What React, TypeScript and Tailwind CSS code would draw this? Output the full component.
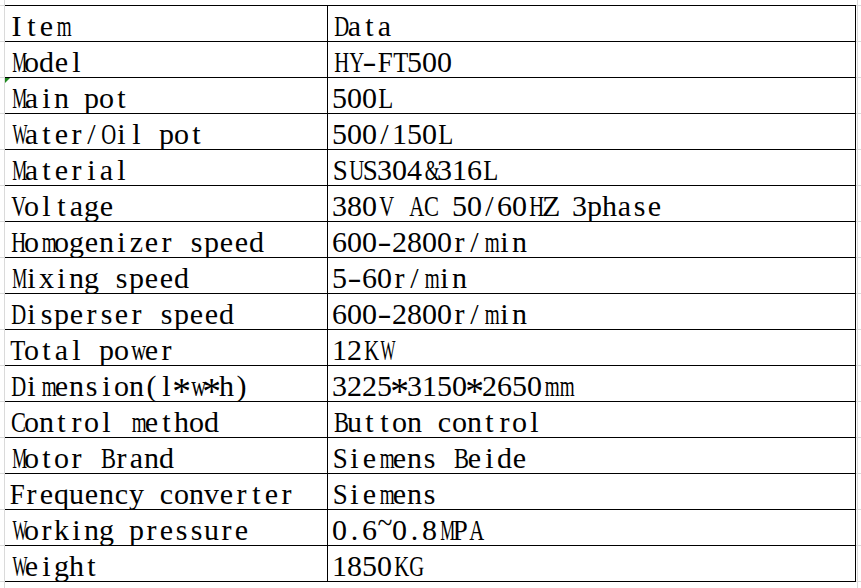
import React from "react";

const rows: [string, string][] = [
  ["Item", "Data"],
  ["Model", "HY-FT500"],
  ["Main pot", "500L"],
  ["Water/Oil pot", "500/150L"],
  ["Material", "SUS304&316L"],
  ["Voltage", "380V AC 50/60HZ 3phase"],
  ["Homogenizer speed", "600-2800r/min"],
  ["Mixing speed", "5-60r/min"],
  ["Disperser speed", "600-2800r/min"],
  ["Total power", "12KW"],
  ["Dimension(l*w*h)", "3225*3150*2650mm"],
  ["Control method", "Button control"],
  ["Motor Brand", "Siemens Beide"],
  ["Frequency converter", "Siemens"],
  ["Working pressure", "0.6~0.8MPA"],
  ["Weight", "1850KG"],
];

const scaleMap: Record<string, string> = {
  m: "scale-x-[0.64]",
  w: "scale-x-[0.69]",
  M: "scale-x-[0.56]",
  W: "scale-x-[0.53]",
  H: "scale-x-[0.69]",
  Y: "scale-x-[0.69]",
  U: "scale-x-[0.69]",
  V: "scale-x-[0.69]",
  A: "scale-x-[0.69]",
  D: "scale-x-[0.69]",
  K: "scale-x-[0.69]",
  G: "scale-x-[0.69]",
  O: "scale-x-[0.69]",
  N: "scale-x-[0.69]",
  F: "scale-x-[0.9]",
  S: "scale-x-[0.9]",
  P: "scale-x-[0.9]",
  T: "scale-x-[0.82]",
  L: "scale-x-[0.82]",
  E: "scale-x-[0.82]",
  C: "scale-x-[0.75]",
  B: "scale-x-[0.75]",
  R: "scale-x-[0.75]",
  "&": "scale-x-[0.64]",
  "~": "scale-x-[0.92] -translate-y-[7px]",
  "-": "scale-x-[1.4]",
  "*": "scale-[1.25] translate-y-[5px]",
};

function Mono({ text }: { text: string }) {
  return (
    <span className="whitespace-nowrap">
      {Array.from(text).map((ch, i) => (
        <span
          key={i}
          className={`inline-block w-[15px] text-center ${scaleMap[ch] ?? ""}`}
        >
          {ch === " " ? "\u00a0" : ch}
        </span>
      ))}
    </span>
  );
}

function GutterLeft({ line }: { line: boolean }) {
  return (
    <>
      <div className={`w-[4px] ${line ? "border-b border-[#dadada]" : ""}`} />
      <div className="w-[1px] bg-[#dadada]" />
    </>
  );
}

function GutterRight({ line }: { line: boolean }) {
  return (
    <>
      <div className={`w-[1px] ${line ? "border-b border-[#dadada]" : ""}`} />
      <div className="w-[1px] bg-[#dadada]" />
      <div className={`flex-1 ${line ? "border-b border-[#dadada]" : ""}`} />
    </>
  );
}

export default function App() {
  return (
    <div
      className="w-[861px] h-[588px] bg-white overflow-hidden flex flex-col text-black text-[30px]"
      style={{ fontFamily: '"Liberation Serif", "Times New Roman", serif' }}
    >
      <div className="flex h-[6px] shrink-0">
        <GutterLeft line />
        <div className="w-[851px] border-b border-black" />
        <GutterRight line />
      </div>
      {rows.map(([a, b], i) => (
        <div key={i} className="flex h-[36px] shrink-0">
          <GutterLeft line />
          <div className="relative w-[323px] h-[36px] border-r border-b border-black pl-[4px] pt-[5px] leading-[30px]">
            {i === 2 && (
              <svg
                className="absolute left-0 top-0"
                width="5"
                height="5"
                viewBox="0 0 5 5"
              >
                <polygon points="0,0 5,0 0,5" fill="#1f8a1f" />
              </svg>
            )}
            <Mono text={a} />
          </div>
          <div className="w-[528px] h-[36px] border-r border-b border-black pl-[4px] pt-[5px] leading-[30px]">
            <Mono text={b} />
          </div>
          <GutterRight line />
        </div>
      ))}
      <div className="flex flex-1">
        <GutterLeft line={false} />
        <div className="w-[851px]" />
        <GutterRight line={false} />
      </div>
    </div>
  );
}
